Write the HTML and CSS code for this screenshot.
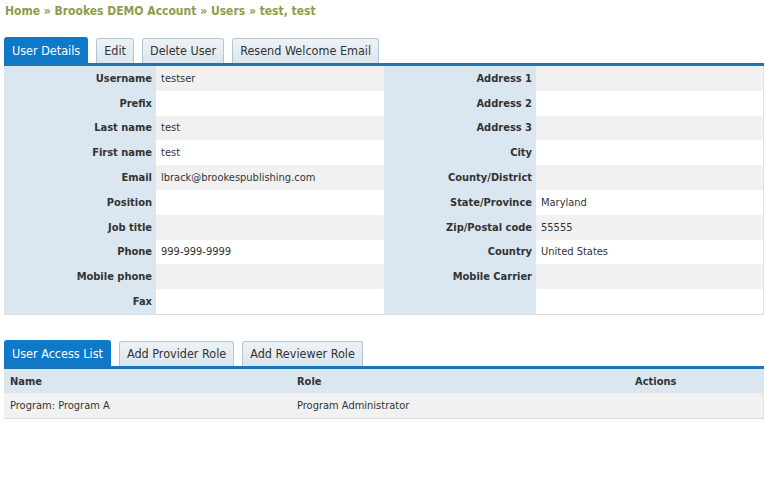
FILE: index.html
```html
<!DOCTYPE html>
<html>
<head>
<meta charset="utf-8">
<link rel="stylesheet" href="styles.css">
</head>
<body>
<div class="crumbs">Home » Brookes DEMO Account » Users » test, test</div>

<div class="tabs tabs-top">
  <span class="tab active">User Details</span>
  <span class="tab">Edit</span>
  <span class="tab">Delete User</span>
  <span class="tab">Resend Welcome Email</span>
</div>
<div class="details">
  <div class="row"><div class="lbl">Username</div><div class="val">testser</div><div class="lbl">Address 1</div><div class="val"></div></div>
  <div class="row"><div class="lbl">Prefix</div><div class="val"></div><div class="lbl">Address 2</div><div class="val"></div></div>
  <div class="row"><div class="lbl">Last name</div><div class="val">test</div><div class="lbl">Address 3</div><div class="val"></div></div>
  <div class="row"><div class="lbl">First name</div><div class="val">test</div><div class="lbl">City</div><div class="val"></div></div>
  <div class="row"><div class="lbl">Email</div><div class="val">lbrack@brookespublishing.com</div><div class="lbl">County/District</div><div class="val"></div></div>
  <div class="row"><div class="lbl">Position</div><div class="val"></div><div class="lbl">State/Province</div><div class="val">Maryland</div></div>
  <div class="row"><div class="lbl">Job title</div><div class="val"></div><div class="lbl">Zip/Postal code</div><div class="val">55555</div></div>
  <div class="row"><div class="lbl">Phone</div><div class="val">999-999-9999</div><div class="lbl">Country</div><div class="val">United States</div></div>
  <div class="row"><div class="lbl">Mobile phone</div><div class="val"></div><div class="lbl">Mobile Carrier</div><div class="val"></div></div>
  <div class="row"><div class="lbl">Fax</div><div class="val"></div><div class="lbl"></div><div class="val"></div></div>
</div>

<div class="tabs tabs-bottom">
  <span class="tab active">User Access List</span>
  <span class="tab">Add Provider Role</span>
  <span class="tab">Add Reviewer Role</span>
</div>
<div class="access">
  <div class="arow head"><div>Name</div><div>Role</div><div>Actions</div></div>
  <div class="arow"><div>Program: Program A</div><div>Program Administrator</div><div></div></div>
</div>
</body>
</html>
```
FILE: styles.css
```css
html, body {
  margin: 0;
  padding: 0;
  background: #fff;
}
body {
  font-family: "DejaVu Sans Condensed", "DejaVu Sans", sans-serif;
  font-size: 11px;
  color: #333;
  width: 765px;
}
.crumbs {
  padding: 4px 0 0 5px;
  height: 17px;
  font-size: 12px;
  font-weight: bold;
  color: #8c9d4c;
}
.tabs {
  display: flex;
  gap: 8px;
  margin-left: 4px;
  width: 760px;
  border-bottom: 3px solid #1b75b9;
  align-items: flex-end;
}
.tabs-top { margin-top: 16px; }
.tabs-bottom { margin-top: 25px; }
.tab {
  display: block;
  height: 24px;
  line-height: 24px;
  padding: 0 7px;
  font-size: 12.5px;
  color: #333;
  background: linear-gradient(#edf2f6, #dde6ed);
  border: 1px solid #b5c6d3;
  border-bottom: none;
  border-radius: 3px 3px 0 0;
}
.tab.active {
  height: 25px;
  line-height: 25px;
  background: #0e78c9;
  border-color: #0e78c9;
  color: #fff;
}
.details {
  margin-left: 4px;
  width: 759px;
  border-right: 1px solid #dde3e8;
  border-bottom: 1px solid #d9dde0;
}
.row {
  display: grid;
  grid-template-columns: 152px 228px 152px 227px;
  height: 24.8px;
  align-items: stretch;
}
.lbl {
  background: #dae6f0;
  font-weight: bold;
  text-align: right;
  padding-right: 4px;
  display: flex;
  align-items: center;
  justify-content: flex-end;
}
.val {
  padding-left: 5px;
  display: flex;
  align-items: center;
  background: #fff;
}
.row:nth-child(odd) .val { background: #f1f1f1; }
.access {
  margin-left: 4px;
  width: 759px;
  border-right: 1px solid #dde3e8;
  border-bottom: 1px solid #d9dde0;
}
.arow {
  display: grid;
  grid-template-columns: 287px 338px 134px;
  height: 24.5px;
  background: #f1f1f1;
}
.arow > div {
  display: flex;
  align-items: center;
  padding-left: 6px;
}
.arow.head {
  background: #dae6f0;
  font-weight: bold;
}
```
